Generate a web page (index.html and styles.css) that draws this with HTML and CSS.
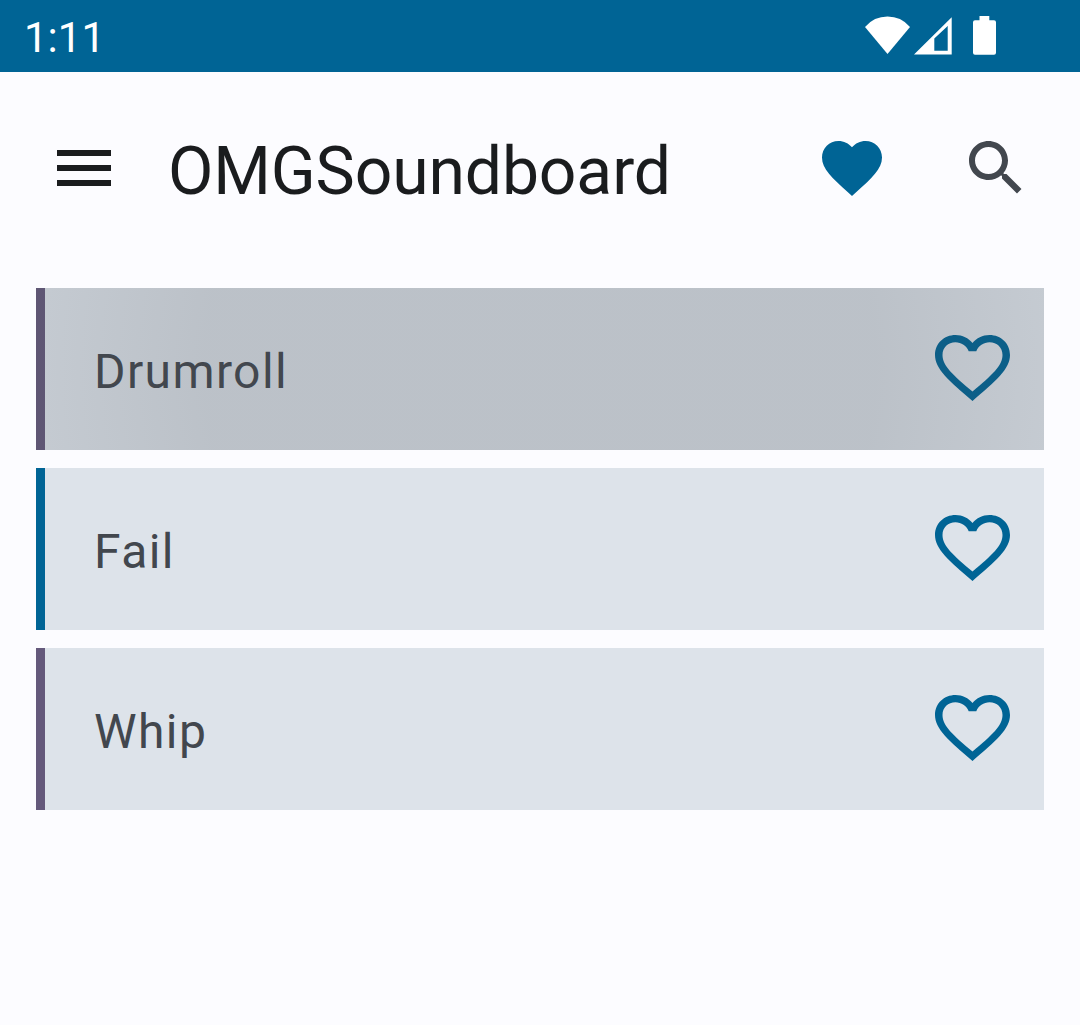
FILE: index.html
```html
<!DOCTYPE html>
<html lang="en">
<head>
<meta charset="utf-8">
<title>OMGSoundboard</title>
<link rel="stylesheet" href="styles.css">
</head>
<body>
<svg class="defs" aria-hidden="true">
  <symbol id="heart-outline" viewBox="0 0 75 66">
    <path fill-rule="evenodd" d="M37.500 66C14 46 0 34 0 20C0 8.500 9 0 20.500 0C27.500 0 33.500 3 37.500 8C41.500 3 47.500 0 54.500 0C66 0 75 8.500 75 20C75 34 61 46 37.500 66ZM37.500 56.500C57 40 67.500 31 67.500 20C67.500 12.500 62 7.300 54.500 7.300C48.800 7.300 43.300 11 41.300 16.200H33.700C31.700 11 26.200 7.300 20.500 7.300C13 7.300 7.500 12.500 7.500 20C7.500 31 18 40 37.500 56.500Z"/>
  </symbol>
</svg>
<header class="status-bar">
  <span class="clock">1:11</span>
  <svg class="status-icons" viewBox="0 0 132 40" aria-hidden="true">
    <path d="M0 11Q9 .6 22.500 .6Q36 .6 45 11L22.500 38Z"/>
    <path fill-rule="evenodd" d="M49 38.500L86.700 1.300V38.500ZM69.300 22.500V34.800H82.700V10Z"/>
    <path d="M114.500 0H124.300V4.300H129Q131 4.300 131 6.300V36.700Q131 38.700 129 38.700H110Q108 38.700 108 36.700V6.300Q108 4.300 110 4.300H114.500Z"/>
  </svg>
</header>
<nav class="app-bar">
  <svg class="icon menu" viewBox="0 0 24 24"><path d="M3 18h18v-2H3v2zm0-5h18v-2H3v2zm0-7v2h18V6H3z"/></svg>
  <h1 class="title">OMGSoundboard</h1>
  <svg class="icon favorites" viewBox="0 0 24 24"><path d="M12 21.350l-1.450-1.320C5.400 15.360 2 12.280 2 8.500 2 5.420 4.420 3 7.500 3c1.740 0 3.410.81 4.500 2.090C13.090 3.810 14.760 3 16.500 3 19.580 3 22 5.420 22 8.500c0 3.780-3.400 6.860-8.550 11.540L12 21.350z"/></svg>
  <svg class="icon search" viewBox="0 0 24 24"><path d="M15.500 14h-.79l-.28-.27C15.410 12.590 16 11.110 16 9.500 16 5.910 13.090 3 9.500 3S3 5.910 3 9.500 5.910 16 9.500 16c1.610 0 3.090-.59 4.230-1.570l.27.28v.79l5 4.990L20.490 19l-4.990-5zm-6 0C7.010 14 5 11.990 5 9.500S7.010 5 9.500 5 14 7.010 14 9.500 11.990 14 9.500 14z"/></svg>
</nav>
<main class="sounds">
  <div class="sound violet pressed"><span class="name">Drumroll</span><svg class="heart"><use href="#heart-outline"/></svg></div>
  <div class="sound blue"><span class="name">Fail</span><svg class="heart"><use href="#heart-outline"/></svg></div>
  <div class="sound violet"><span class="name">Whip</span><svg class="heart"><use href="#heart-outline"/></svg></div>
</main>
</body>
</html>
```
FILE: styles.css
```css
* {
  box-sizing: border-box;
}

body {
  margin: 0;
  min-height: 1025px;
  background: #fcfcff;
  font-family: Roboto, sans-serif;
}

.defs {
  display: none;
}

.status-bar {
  display: flex;
  align-items: flex-start;
  justify-content: space-between;
  height: 72px;
  padding: 16px 83px 0 24px;
  background: #006495;
  color: #fff;
}

.clock {
  margin-top: 1px;
  font-size: 42px;
  line-height: 42px;
}

.status-icons {
  width: 132px;
  height: 40px;
  fill: #fff;
}

.app-bar {
  display: flex;
  align-items: center;
  height: 192px;
  padding: 0 48px;
}

.icon {
  flex: none;
  width: 72px;
  height: 72px;
}

.menu {
  fill: #1a1c1e;
}

.title {
  flex: 1;
  margin: 8px 0 0 48px;
  color: #1a1c1e;
  font-size: 66px;
  font-weight: 400;
  letter-spacing: -0.12px;
  line-height: 78px;
}

.favorites {
  fill: #006495;
}

.search {
  margin-left: 72px;
  fill: #42474e;
}

.sounds {
  display: flex;
  flex-direction: column;
  gap: 18px;
  padding: 24px 36px;
}

.sound {
  position: relative;
  display: flex;
  align-items: center;
  justify-content: space-between;
  height: 162px;
  padding: 0 34px 0 49px;
  border-left: 9px solid;
  background: #dde3ea;
}

.violet {
  border-color: #64597b;
}

.blue {
  border-color: #006495;
}

.name {
  margin-top: 5px;
  color: #42474e;
  font-size: 48px;
  letter-spacing: 1.4px;
  line-height: 72px;
}

.heart {
  width: 75px;
  height: 66px;
  margin-bottom: 2px;
  fill: #006495;
}

/* Touch ripple spreading over the whole row, accent strip included */
.pressed::after {
  content: "";
  position: absolute;
  inset: 0 0 0 -9px;
  background: radial-gradient(circle 510px at 504px 81px, rgba(66, 71, 78, 0.215) 66%, rgba(66, 71, 78, 0.155) 100%);
}
```
